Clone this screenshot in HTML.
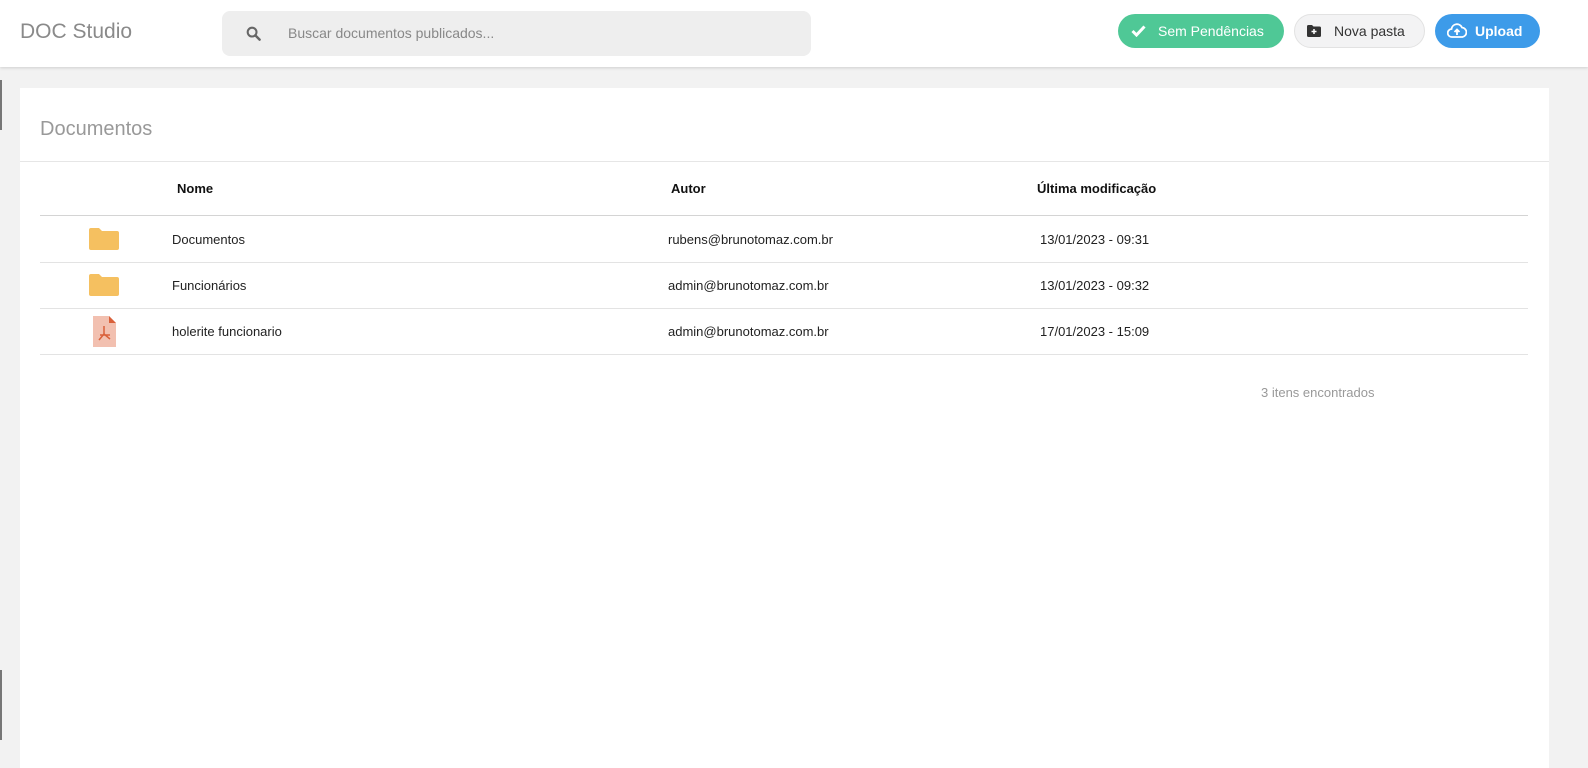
<!DOCTYPE html>
<html><head><meta charset="utf-8"><style>
*{box-sizing:border-box;margin:0;padding:0}
body{width:1588px;height:762px;background:#f2f2f2;font-family:"Liberation Sans",sans-serif;position:relative;overflow:hidden}
.top{position:absolute;left:0;top:0;width:1588px;height:67px;background:#fff;box-shadow:0 1px 3px rgba(0,0,0,.15)}
.logo{position:absolute;left:20px;top:20px;font-size:21px;color:#8a8a8a}
.search{position:absolute;left:222px;top:11px;width:589px;height:45px;background:#eee;border-radius:8px}
.search span{position:absolute;left:66px;top:14px;font-size:14px;color:#888}
.btn{position:absolute;top:14px;height:34px;border-radius:17px;font-size:14px;line-height:34px}
.card{position:absolute;left:20px;top:88px;width:1529px;height:680px;background:#fff}
.title{position:absolute;left:20px;top:30px;font-size:20px;color:#999}
.hr{position:absolute;left:0;top:73px;width:100%;height:1px;background:#e6e6e6}
.th{position:absolute;top:93px;font-size:13px;font-weight:bold;color:#111}
.line{position:absolute;left:20px;width:1488px;height:1px;background:#e3e3e3}
.td{position:absolute;font-size:13px;color:#222}
</style></head><body>
<div class="top">
 <div class="logo">DOC Studio</div>
 <div class="search"><svg style="position:absolute;left:24px;top:15px" width="15" height="15" viewBox="0 0 16 16"><circle cx="6.5" cy="6.5" r="4.7" fill="none" stroke="#666" stroke-width="2.2"/><path d="M10 10l4.5 4.5" stroke="#666" stroke-width="2.6" stroke-linecap="round"/></svg><span>Buscar documentos publicados...</span></div>
 <div class="btn" style="left:1118px;width:166px;background:#4fc896;color:#fff"><svg style="position:absolute;left:13px;top:11px" width="15" height="12" viewBox="0 0 15 12"><path d="M1.5 6l4 4 8-8.5" fill="none" stroke="#fff" stroke-width="3"/></svg><span style="position:absolute;left:40px">Sem Pendências</span></div>
 <div class="btn" style="left:1294px;width:131px;background:#f3f3f4;border:1px solid #e2e2e2;color:#333;line-height:32px"><svg style="position:absolute;left:12px;top:10px" width="14" height="12" viewBox="0 0 14 12"><path d="M0 1.5Q0 0 1.5 0H5l1.5 1.5h6Q14 1.5 14 3v7.5Q14 12 12.5 12h-11Q0 12 0 10.5z" fill="#333"/><path d="M7 4v5M4.5 6.5h5" stroke="#fff" stroke-width="1.5"/></svg><span style="position:absolute;left:39px">Nova pasta</span></div>
 <div class="btn" style="left:1435px;width:105px;background:#3d9be9;color:#fff"><svg style="position:absolute;left:12px;top:9px" width="20" height="15" viewBox="0 0 20 15"><path d="M5 14a4 4 0 0 1-.5-8A5.5 5.5 0 0 1 15 4.5 4.8 4.8 0 0 1 15.5 14z" fill="none" stroke="#fff" stroke-width="1.8"/><path d="M10 12V6.5M7.5 9l2.5-2.5 2.5 2.5" fill="none" stroke="#fff" stroke-width="1.8"/></svg><span style="position:absolute;left:40px;font-weight:bold">Upload</span></div>
</div>
<div style="position:absolute;left:0;top:80px;width:2px;height:50px;background:#777"></div>
<div style="position:absolute;left:0;top:670px;width:2px;height:70px;background:#777"></div>
<div class="card">
 <div class="title">Documentos</div>
 <div class="hr"></div>
 <div class="th" style="left:157px">Nome</div>
 <div class="th" style="left:651px">Autor</div>
 <div class="th" style="left:1017px">Última modificação</div>
 <div class="line" style="top:127px;background:#d4d4d4"></div>
 <svg style="position:absolute;left:69px;top:140px" width="30" height="22" viewBox="0 0 30 22"><path d="M0 2Q0 0 2 0h8l3 3h15q2 0 2 2v15q0 2-2 2H2q-2 0-2-2z" fill="#f5c060"/></svg>
 <div class="td" style="left:152px;top:144px">Documentos</div><div class="td" style="left:648px;top:144px">rubens@brunotomaz.com.br</div><div class="td" style="left:1020px;top:144px">13/01/2023 - 09:31</div>
 <div class="line" style="top:174px"></div>
 <svg style="position:absolute;left:69px;top:186px" width="30" height="22" viewBox="0 0 30 22"><path d="M0 2Q0 0 2 0h8l3 3h15q2 0 2 2v15q0 2-2 2H2q-2 0-2-2z" fill="#f5c060"/></svg>
 <div class="td" style="left:152px;top:190px">Funcionários</div><div class="td" style="left:648px;top:190px">admin@brunotomaz.com.br</div><div class="td" style="left:1020px;top:190px">13/01/2023 - 09:32</div>
 <div class="line" style="top:220px"></div>
 <svg style="position:absolute;left:73px;top:228px" width="23" height="31" viewBox="0 0 23 31"><path d="M0 0h16l7 7v24H0z" fill="#f2c0b0"/><path d="M16 0l7 7h-7z" fill="#d9603a"/><path d="M11 10v8l-5 6M11 18l6 5M7 19h10" fill="none" stroke="#d9603a" stroke-width="1.5"/></svg>
 <div class="td" style="left:152px;top:236px">holerite funcionario</div><div class="td" style="left:648px;top:236px">admin@brunotomaz.com.br</div><div class="td" style="left:1020px;top:236px">17/01/2023 - 15:09</div>
 <div class="line" style="top:266px"></div>
 <div class="td" style="left:1241px;top:297px;color:#999">3 itens encontrados</div>
</div>
</body></html>
